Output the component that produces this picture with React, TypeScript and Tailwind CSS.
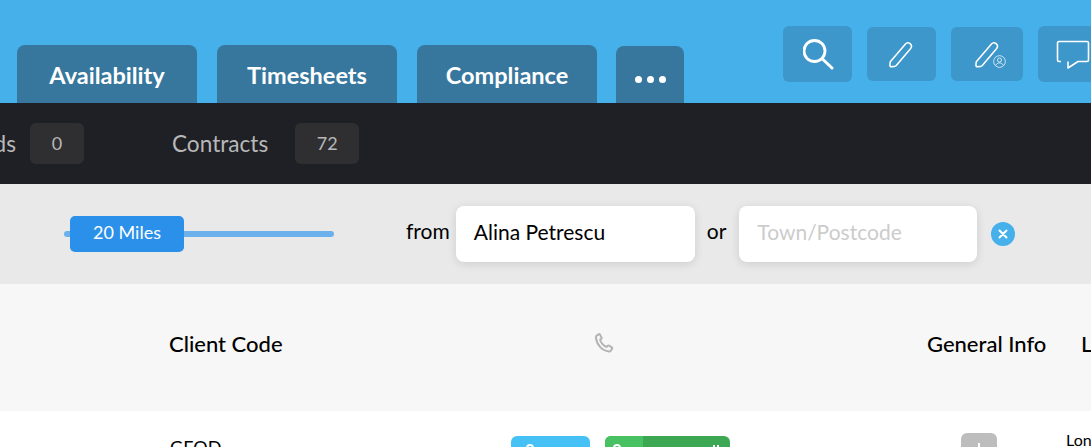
const TABS = ['Availability', 'Timesheets', 'Compliance'];

function SearchIcon() {
  return (
    <svg viewBox="0 0 32 32" fill="none" stroke="currentColor" strokeWidth="2.800" strokeLinecap="round" className="h-8 w-8 translate-x-[1px]">
      <circle cx="11.500" cy="13" r="10.500" />
      <path d="M19.500 21 29 30" strokeWidth="3" />
    </svg>
  );
}

function PencilIcon() {
  return (
    <svg viewBox="0 0 28 28" fill="none" stroke="currentColor" strokeWidth="1.600" strokeLinejoin="round" className="h-[27px] w-[27px]">
      <path d="M2.600 21.200 17.900 3.300c1.300-1.500 3.400-1.700 5-.5 1.600 1.300 1.800 3.400.6 5L8.600 25.400c-.5.600-1 .8-1.700.9l-3.400.3c-.9.1-1.500-.5-1.500-1.400l.2-2.600c0-.6.1-1 .4-1.400Z" />
    </svg>
  );
}

function PersonBadge() {
  return (
    <svg viewBox="0 0 14 14" fill="none" stroke="currentColor" strokeWidth="0.8" className="absolute left-[42px] top-[28px] h-[13px] w-[13px]">
      <circle cx="7" cy="7" r="6.300" />
      <circle cx="7" cy="5.400" r="2.200" />
      <path d="M3 11c.8-1.700 2.300-2.400 4-2.400s3.200.7 4 2.400" />
    </svg>
  );
}

function ChatIcon() {
  return (
    <svg viewBox="0 0 34 30" fill="none" stroke="currentColor" strokeWidth="1.600" strokeLinejoin="round" className="h-[30px] w-[34px] translate-y-[1px]">
      <path d="M5 21.500H3a1.500 1.500 0 0 1-1.500-1.500V3A1.500 1.500 0 0 1 3 1.500h28A1.500 1.500 0 0 1 32.500 3v17a1.500 1.500 0 0 1-1.500 1.500H22l-10 6.500v-6.500" />
    </svg>
  );
}

function PhoneIcon() {
  return (
    <svg viewBox="0 0 20 20" fill="none" stroke="#b4b4b4" strokeWidth="2" strokeLinejoin="round" className="h-5 w-5">
      <path d="M2.500 2.700 4.600 1.300c.6-.3 1-.2 1.300.3l1.600 2.800c.3.500.2.900-.2 1.300L6.200 6.600c.3 2.800 3.200 6.400 6.300 7.300l1.200-1.100c.4-.3.800-.4 1.300-.1l2.800 1.700c.4.300.5.800.3 1.200l-1.400 2.100c-.4.600-1 .8-1.700.7C7.800 17.700 2.600 11.700 1.900 4.400c0-.7.100-1.300.6-1.700Z" />
    </svg>
  );
}

function ToolButton({ className, children }: { className: string; children: React.ReactNode }) {
  return (
    <div className={`relative flex shrink-0 items-center justify-center rounded-md bg-[#3d97cb] text-white ${className}`}>
      {children}
    </div>
  );
}

export default function App() {
  return (
    <div className="flex h-[447px] w-[1091px] flex-col overflow-hidden font-['Lato',sans-serif]">
      <header className="flex h-[103px] shrink-0 justify-between bg-[#45b0ea] pl-[17px]">
        <nav className="flex items-end">
          {TABS.map((tab) => (
            <div
              key={tab}
              className="mr-5 flex h-[58px] w-[180px] items-center justify-center rounded-t-lg bg-[#37779d] pt-[4px] text-[23.500px] font-bold text-white"
            >
              {tab}
            </div>
          ))}
          <div className="-ml-px flex h-[57px] w-[68px] items-center justify-center gap-[5px] rounded-t-lg bg-[#37779d] pt-[10px]">
            <span className="h-[7px] w-[7px] rounded-full bg-white" />
            <span className="h-[7px] w-[7px] rounded-full bg-white" />
            <span className="h-[7px] w-[7px] rounded-full bg-white" />
          </div>
        </nav>
        <div className="flex w-[308px] shrink-0 items-start gap-[15px] overflow-hidden pt-[26px]">
          <ToolButton className="h-[56px] w-[69px]">
            <SearchIcon />
          </ToolButton>
          <ToolButton className="mt-px h-[54px] w-[69px]">
            <PencilIcon />
          </ToolButton>
          <ToolButton className="mt-px h-[54px] w-[72px]">
            <PencilIcon />
            <PersonBadge />
          </ToolButton>
          <ToolButton className="h-[56px] w-[69px] !justify-start pl-[18px]">
            <ChatIcon />
          </ToolButton>
        </div>
      </header>

      <div className="flex h-[81px] shrink-0 items-center bg-[#1f2025] text-[22.600px] text-[#b8b8b8]">
        <div className="flex w-4 justify-end overflow-hidden">
          <span>Leads</span>
        </div>
        <span className="ml-[14px] flex h-[41px] w-[54px] items-center justify-center rounded-md bg-[#2f2f31] pb-[2px] text-lg">0</span>
        <span className="ml-[88px]">Contracts</span>
        <span className="ml-[27px] flex h-[41px] w-[64px] items-center justify-center rounded-md bg-[#2f2f31] pb-[2px] text-lg">72</span>
      </div>

      <div className="flex h-[100px] shrink-0 items-center bg-[#e9e9e9] pl-[64px] text-[21px] text-black">
        <div className="flex w-[270px] items-center">
          <span className="h-[6px] w-[6px] rounded-l-full bg-[#6cb1ec]" />
          <span className="flex h-9 w-[114px] items-center justify-center rounded-[5px] bg-[#2a90e9] pb-[5px] text-lg text-white">20 Miles</span>
          <span className="h-[6px] w-[150px] rounded-r-full bg-[#6cb1ec]" />
        </div>
        <span className="ml-[72px] pb-[6px]">from</span>
        <div className="ml-[6px] flex h-[56px] w-[239px] items-center rounded-lg bg-white pb-[4px] pl-[18px] shadow-[0_2px_10px_rgba(0,0,0,0.12)]">
          Alina Petrescu
        </div>
        <span className="ml-[12px] pb-[6px]">or</span>
        <div className="ml-[13px] flex h-[56px] w-[238px] items-center rounded-lg bg-white pb-[4px] pl-[18px] text-[#cccccc] shadow-[0_2px_10px_rgba(0,0,0,0.12)]">
          Town/Postcode
        </div>
        <span className="ml-[14px] flex h-6 w-6 items-center justify-center rounded-full bg-[#45b0ea] text-white">
          <svg viewBox="0 0 10 10" stroke="currentColor" strokeWidth="2" strokeLinecap="round" className="h-[10px] w-[10px]">
            <path d="M1.500 1.500l7 7M8.500 1.500l-7 7" />
          </svg>
        </span>
      </div>

      <div className="flex h-[127px] shrink-0 items-center bg-[#f7f7f7] pl-[169px] pb-[9px] text-[22px] font-medium text-black">
        <span className="w-[425px] shrink-0">Client Code</span>
        <span className="w-[333px] shrink-0">
          <PhoneIcon />
        </span>
        <span className="w-[154px] shrink-0">General Info</span>
        <span className="shrink-0">Location</span>
      </div>

      <div className="flex min-h-0 flex-1 items-start overflow-hidden bg-white pl-[170px]">
        <span className="mt-[26px] w-[341px] shrink-0 text-lg leading-5 text-black">GEOD</span>
        <span className="mt-[25px] flex h-10 w-[79px] shrink-0 rounded-md bg-[#45c1f5] pl-[15px] pt-[8px]">
          <span className="h-[8px] w-[8px] rounded-full border-2 border-white" />
        </span>
        <span className="mt-[25px] ml-[15px] flex h-10 w-[125px] shrink-0 overflow-hidden rounded-md bg-[#3da854]">
          <span className="flex h-full w-[38px] bg-[#47c162] pl-[8px] pt-[8px]">
            <span className="h-[8px] w-[8px] rounded-full border-2 border-white" />
          </span>
          <span className="ml-auto mr-[11px] mt-[9px] flex gap-[2px]">
            <span className="h-[6px] w-[2px] bg-white" />
            <span className="h-[6px] w-[2px] bg-white" />
          </span>
        </span>
        <span className="mt-[22px] ml-[231px] flex h-9 w-9 shrink-0 justify-center rounded-md bg-[#bdbdbd] pt-[10px]">
          <span className="h-4 w-[2px] bg-white" />
        </span>
        <span className="mt-[19px] ml-[69px] shrink-0 text-base leading-5 text-black">London</span>
      </div>
    </div>
  );
}
